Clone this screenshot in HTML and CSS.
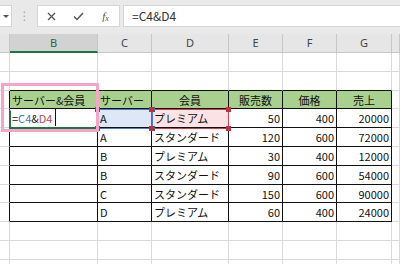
FILE: index.html
```html
<!DOCTYPE html>
<html lang="ja">
<head>
<meta charset="utf-8">
<link rel="stylesheet" href="styles.css">
</head>
<body>
<div class="fbar">
  <div class="namebox"><span class="caret"></span></div>
  <div class="grip">⋮</div>
  <div class="btnbox">
    <span class="slot"><svg width="9" height="9" viewBox="0 0 9 9"><path d="M1 1L8 8M8 1L1 8" stroke="#555" stroke-width="1.3" fill="none"/></svg></span>
    <span class="slot"><svg width="11" height="9" viewBox="0 0 11 9"><path d="M1 4.5L4 7.5L10 1" stroke="#555" stroke-width="1.5" fill="none"/></svg></span>
    <span class="slot fx">f<span class="fxs">x</span></span>
  </div>
  <div class="formula">=C4&amp;D4</div>
</div>
<div class="sheet">
  <div class="ch"></div><div class="ch sel">B</div><div class="ch">C</div><div class="ch">D</div><div class="ch">E</div><div class="ch">F</div><div class="ch">G</div><div class="ch"></div>

  <div class="c"></div><div class="c"></div><div class="c"></div><div class="c"></div><div class="c"></div><div class="c"></div><div class="c"></div><div class="c"></div>

  <div class="c"></div><div class="c tb"></div><div class="c tb"></div><div class="c tb"></div><div class="c tb"></div><div class="c tb"></div><div class="c tb"></div><div class="c"></div>

  <div class="c tl"></div><div class="c t h">サーバー&amp;会員</div><div class="c t h">サーバー</div><div class="c t h ctr">会員</div><div class="c t h ctr">販売数</div><div class="c t h ctr">価格</div><div class="c t h ctr">売上</div><div class="c"></div>

  <div class="c tl"></div><div class="c t edit">=<span class="rc">C4</span>&amp;<span class="rd">D4</span><span class="cursor"></span></div><div class="c t refc">A</div><div class="c t refd kana">プレミアム</div><div class="c t r">50</div><div class="c t r">400</div><div class="c t r">20000</div><div class="c"></div>

  <div class="c tl"></div><div class="c t"></div><div class="c t">A</div><div class="c t kana">スタンダード</div><div class="c t r">120</div><div class="c t r">600</div><div class="c t r">72000</div><div class="c"></div>

  <div class="c tl"></div><div class="c t"></div><div class="c t">B</div><div class="c t kana">プレミアム</div><div class="c t r">30</div><div class="c t r">400</div><div class="c t r">12000</div><div class="c"></div>

  <div class="c tl"></div><div class="c t"></div><div class="c t">B</div><div class="c t kana">スタンダード</div><div class="c t r">90</div><div class="c t r">600</div><div class="c t r">54000</div><div class="c"></div>

  <div class="c tl"></div><div class="c t"></div><div class="c t">C</div><div class="c t kana">スタンダード</div><div class="c t r">150</div><div class="c t r">600</div><div class="c t r">90000</div><div class="c"></div>

  <div class="c tl"></div><div class="c t"></div><div class="c t">D</div><div class="c t kana">プレミアム</div><div class="c t r">60</div><div class="c t r">400</div><div class="c t r">24000</div><div class="c"></div>

  <div class="c"></div><div class="c"></div><div class="c"></div><div class="c"></div><div class="c"></div><div class="c"></div><div class="c"></div><div class="c"></div>
  <div class="c"></div><div class="c"></div><div class="c"></div><div class="c"></div><div class="c"></div><div class="c"></div><div class="c"></div><div class="c"></div>
  <div class="c"></div><div class="c"></div><div class="c"></div><div class="c"></div><div class="c"></div><div class="c"></div><div class="c"></div><div class="c"></div>

  <div class="selbox"></div>
  <div class="refbox blue"><i class="hd tl1"></i><i class="hd tr1"></i><i class="hd bl1"></i><i class="hd br1"></i></div>
  <div class="refbox red"><i class="hd tl1"></i><i class="hd tr1"></i><i class="hd bl1"></i><i class="hd br1"></i></div>
  <div class="annot"></div>
</div>
</body>
</html>
```

FILE: styles.css
```css
* { box-sizing: border-box; margin: 0; padding: 0; }
html, body { width: 400px; height: 264px; overflow: hidden; }
body {
  background: #fff;
  font-family: "Noto Sans CJK JP", "Noto Sans", sans-serif;
  font-size: 11px;
  color: #222;
}
.fbar {
  height: 34px;
  background: #e9e9e9;
  display: flex;
  align-items: flex-start;
  padding-top: 5px;
}
.namebox {
  width: 12px;
  height: 22px;
  background: #fff;
  border: 1px solid #d4d4d4;
  border-left: none;
  display: flex;
  align-items: center;
  justify-content: center;
}
.caret {
  width: 0; height: 0;
  border-left: 3px solid transparent;
  border-right: 3px solid transparent;
  border-top: 3px solid #555;
}
.grip {
  width: 25px;
  height: 22px;
  display: flex;
  align-items: center;
  justify-content: center;
  color: #aaa;
  font-size: 12px;
  font-family: "DejaVu Sans", sans-serif;
}
.btnbox {
  width: 83px;
  height: 22px;
  background: #fff;
  border: 1px solid #d6d6d6;
  display: flex;
  align-items: center;
}
.slot {
  width: 27px;
  height: 20px;
  display: flex;
  align-items: center;
  justify-content: center;
}
.fx {
  font-family: "Liberation Serif", serif;
  font-style: italic;
  font-size: 11px;
  color: #555;
}
.fxs { font-size: 8px; position: relative; top: 2px; }
.formula {
  margin-left: 3px;
  flex: 1;
  height: 22px;
  background: #fff;
  border: 1px solid #d6d6d6;
  border-right: none;
  padding-left: 8px;
  font-size: 12px;
  line-height: 20px;
  color: #333;
}
.sheet {
  position: relative;
  height: 230px;
  overflow: hidden;
  display: grid;
  grid-template-columns: 10px 88px 54px 77px 54px 54px 55px 8px;
  grid-template-rows: 19px repeat(12, 18.8px);
}
.ch {
  background: #e6e6e6;
  border-right: 1px solid #c6c6c6;
  border-bottom: 1px solid #c6c6c6;
  text-align: center;
  color: #444;
  font-size: 11px;
  line-height: 18px;
  font-family: "Noto Sans", sans-serif;
}
.ch.sel {
  background: #d2d2d2;
  color: #1f6b43;
  border-bottom: 2px solid #217346;
}
.c {
  border-right: 1px solid #dadada;
  border-bottom: 1px solid #dadada;
  padding: 0 2px;
  line-height: 18px;
  white-space: nowrap;
  overflow: hidden;
  color: #111;
}
.c.t { border-right-color: #111; border-bottom-color: #111; }
.c.tb { border-bottom-color: #111; }
.c.tl { border-right-color: #111; }
.h { background: #a9d08e; }
.ctr { text-align: center; }
.r { text-align: right; }
.kana { letter-spacing: 0; }
.refc { background: #dde7f5; }
.refd { background: #fbe3e5; }
.rc { color: #4472c4; }
.rd { color: #c8434f; }
.cursor {
  display: inline-block;
  width: 1px;
  height: 17px;
  background: #111;
  margin-left: 3px;
  vertical-align: top;
}
.selbox {
  position: absolute;
  left: 9px;
  top: 75px;
  width: 90px;
  height: 20px;
  border: 2px solid #217346;
  border-top-color: transparent;
}
.refbox {
  position: absolute;
  top: 75px;
  height: 20px;
  border: 1px solid;
}
.refbox.blue { left: 97px; width: 56px; border-color: #4a7bd0; }
.refbox.red { left: 151px; width: 78px; border-color: #c8434f; }
.hd {
  position: absolute;
  width: 5px;
  height: 5px;
}
.blue .hd { background: #2f5fb3; }
.red .hd { background: #c0303d; }
.tl1 { left: -3px; top: -3px; }
.tr1 { right: -3px; top: -3px; }
.bl1 { left: -3px; bottom: -3px; }
.br1 { right: -3px; bottom: -3px; }
.annot {
  position: absolute;
  left: 1px;
  top: 49px;
  width: 98px;
  height: 49px;
  border: 3px solid #f5a5c8;
}
```
